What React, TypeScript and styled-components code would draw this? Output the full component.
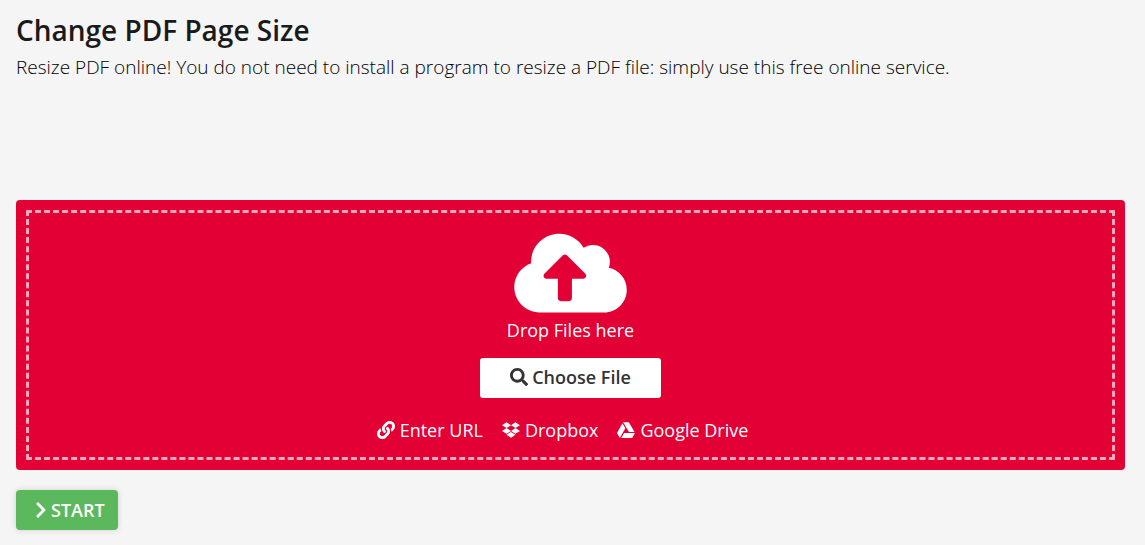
import React from 'react';
import styled, { createGlobalStyle } from 'styled-components';
import { FaCloudUploadAlt, FaSearch, FaLink, FaDropbox, FaGoogleDrive, FaChevronRight } from 'react-icons/fa';

const GlobalStyle = createGlobalStyle`
  * { box-sizing: border-box; }
  body {
    margin: 0;
    background: #f5f5f5;
    color: #1a1a1a;
    font-family: 'Open Sans', sans-serif;
    font-size: 18px;
    line-height: 24px;
  }
`;

const Page = styled.main`
  padding: 11px 20px 16px 16px;
`;

const Header = styled.header`
  min-height: 189px;
`;

const Title = styled.h1`
  margin: 0;
  font-size: 28px;
  line-height: 38px;
  font-weight: 600;
`;

const Intro = styled.p`
  margin: 6px 0 0;
  font-size: 19px;
  font-weight: 300;
  color: #000;
`;

const DropZone = styled.section`
  padding: 10px;
  border-radius: 4px;
  background: #e20035;
  color: #fff;
`;

const DropArea = styled.div`
  display: flex;
  flex-direction: column;
  align-items: center;
  padding: 15px 0;
  border: 3px dashed rgba(255, 255, 255, 0.67);
`;

const CloudIcon = styled(FaCloudUploadAlt)`
  display: block;
  width: 115px;
  height: 90px;
`;

const DropText = styled.p`
  margin: 0 0 16px;
`;

const ChooseButton = styled.button`
  display: flex;
  align-items: center;
  justify-content: center;
  gap: 4px;
  height: 40px;
  padding: 0 30px 2px;
  border: 0;
  border-radius: 3px;
  background: #fff;
  color: #333;
  font: inherit;
  font-weight: 600;
`;

const Sources = styled.nav`
  display: flex;
  gap: 19px;
  margin: 20px 16px 0 0;
`;

const SourceLink = styled.a`
  display: flex;
  align-items: center;
  gap: 5px;
  color: #fff;
  text-decoration: none;
`;

const StartButton = styled.button`
  display: flex;
  align-items: center;
  gap: 1px;
  height: 40px;
  margin-top: 20px;
  padding: 0 13px 0 16px;
  border: 0;
  border-radius: 4px;
  background: #5cb85c;
  color: #fff;
  font: inherit;
  font-weight: 600;
  box-shadow: 0 0 6px rgba(0, 0, 0, 0.15);
`;

export default function App() {
  return (
    <>
      <GlobalStyle />
      <Page>
        <Header>
          <Title>Change PDF Page Size</Title>
          <Intro>
            Resize PDF online! You do not need to install a program to resize a PDF file: simply use this free online service.
          </Intro>
        </Header>
        <DropZone>
          <DropArea>
            <CloudIcon />
            <DropText>Drop Files here</DropText>
            <ChooseButton type="button"><FaSearch size={18} />Choose File</ChooseButton>
            <Sources>
              <SourceLink href="#url"><FaLink size={18} />Enter URL</SourceLink>
              <SourceLink href="#dropbox"><FaDropbox size={18} />Dropbox</SourceLink>
              <SourceLink href="#drive"><FaGoogleDrive size={18} />Google Drive</SourceLink>
            </Sources>
          </DropArea>
        </DropZone>
        <StartButton type="button"><FaChevronRight size={18} />START</StartButton>
      </Page>
    </>
  );
}
